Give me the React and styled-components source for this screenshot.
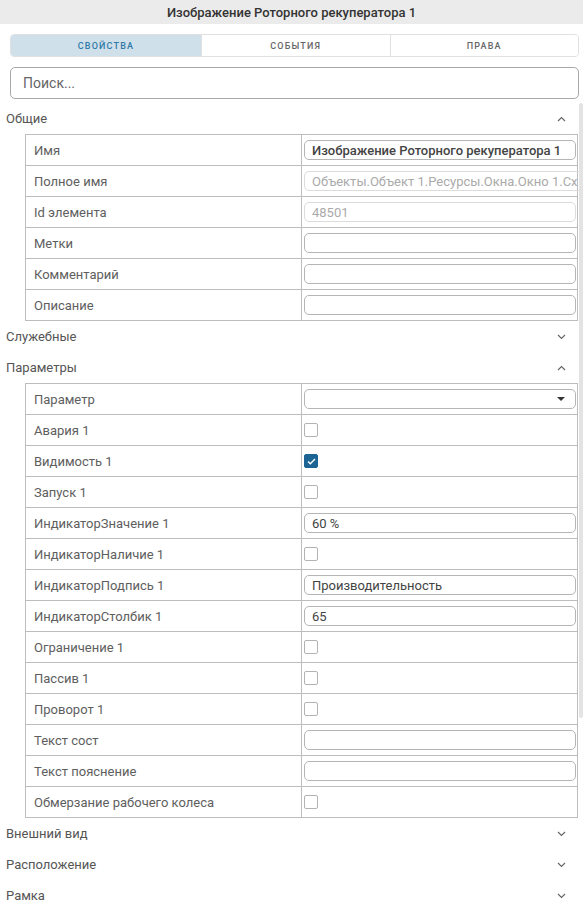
import styled, { createGlobalStyle } from 'styled-components';

const GlobalStyle = createGlobalStyle`
  html, body {
    margin: 0;
    padding: 0;
    background: #fff;
    font-family: Roboto, "Liberation Sans", Arial, sans-serif;
    overflow: hidden;
  }
  * { box-sizing: border-box; }
`;

const general = [
    { label: 'Имя', kind: 'text', value: 'Изображение Роторного рекуператора 1', strong: true },
    { label: 'Полное имя', kind: 'text', value: 'Объекты.Объект 1.Ресурсы.Окна.Окно 1.Сх', disabled: true },
    { label: 'Id элемента', kind: 'text', value: '48501', disabled: true },
    { label: 'Метки', kind: 'text', value: '' },
    { label: 'Комментарий', kind: 'text', value: '' },
    { label: 'Описание', kind: 'text', value: '' },
];

const params = [
    { label: 'Параметр', kind: 'select' },
    { label: 'Авария 1', kind: 'check' },
    { label: 'Видимость 1', kind: 'check', checked: true },
    { label: 'Запуск 1', kind: 'check' },
    { label: 'ИндикаторЗначение 1', kind: 'text', value: '60 %' },
    { label: 'ИндикаторНаличие 1', kind: 'check' },
    { label: 'ИндикаторПодпись 1', kind: 'text', value: 'Производительность' },
    { label: 'ИндикаторСтолбик 1', kind: 'text', value: '65' },
    { label: 'Ограничение 1', kind: 'check' },
    { label: 'Пассив 1', kind: 'check' },
    { label: 'Проворот 1', kind: 'check' },
    { label: 'Текст сост', kind: 'text', value: '' },
    { label: 'Текст пояснение', kind: 'text', value: '' },
    { label: 'Обмерзание рабочего колеса', kind: 'check' },
];

const Page = styled.div`
  width: 583px;
  height: 100vh;
  display: flex;
  flex-direction: column;
`;

const Title = styled.div`
  height: 24px;
  background: #ebebeb;
  color: #333;
  font-size: 13px;
  font-weight: 500;
  display: flex;
  align-items: center;
  justify-content: center;
`;

const Tabs = styled.div`
  margin: 10px 4px 0 10px;
  height: 23px;
  border: 1px solid #e0e0e0;
  border-radius: 4px;
  display: grid;
  grid-template-columns: 190px 1fr 1fr;
  overflow: hidden;
`;

const Tab = styled.div`
  display: flex;
  align-items: center;
  justify-content: center;
  font-size: 9px;
  font-weight: 500;
  letter-spacing: 1.2px;
  background: ${p => (p.$active ? '#cfe0ea' : '#fff')};
  color: ${p => (p.$active ? '#2f7aa8' : '#666')};
  & + & { border-left: 1px solid #e0e0e0; }
`;

const Search = styled.input`
  margin: 10px 4px 0 10px;
  height: 32px;
  border: 1px solid #a8a8a8;
  border-radius: 5px;
  padding: 0 12px;
  font-family: inherit;
  font-size: 14px;
  color: #333;
  outline: none;
  &::placeholder { color: #666; }
`;

const Body = styled.div`
  margin-top: 4px;
  flex: 1;
  min-height: 0;
  display: grid;
  grid-template-columns: 1fr 4px;
  overflow: hidden;
`;

const Content = styled.div`
  min-width: 0;
`;

const Rail = styled.div`
  display: flex;
  flex-direction: column;
`;

const Thumb = styled.div`
  height: 615px;
  background: #e3e3e3;
  border-radius: 2px;
`;

const SectionHead = styled.div`
  height: 31px;
  display: flex;
  align-items: center;
  justify-content: space-between;
  padding: 0 13px 0 6px;
  font-size: 13px;
  color: #555;
`;

const Table = styled.div`
  margin: 0 1px 0 25px;
  border: 1px solid #bdbdbd;
  border-bottom: none;
`;

const Row = styled.div`
  display: grid;
  grid-template-columns: 276px 1fr;
  height: 31px;
  border-bottom: 1px solid #bdbdbd;
`;

const Label = styled.div`
  display: flex;
  align-items: center;
  padding-left: 8px;
  font-size: 13px;
  color: #5e5e5e;
  border-right: 1px solid #bdbdbd;
`;

const Cell = styled.div`
  display: flex;
  align-items: center;
  padding: 0 1px 0 2px;
`;

const Field = styled.div`
  flex: 1;
  height: 20px;
  border: 1px solid ${p => (p.$disabled ? '#dcdcdc' : '#b5b5b5')};
  border-radius: 5px;
  padding: 0 7px;
  display: flex;
  align-items: center;
  justify-content: space-between;
  font-size: 13px;
  white-space: nowrap;
  overflow: hidden;
  color: ${p => (p.$disabled ? '#aaa' : '#444')};
  font-weight: ${p => (p.$strong ? 500 : 400)};
`;

const Box = styled.div`
  width: 14px;
  height: 14px;
  border-radius: 2px;
  border: 1.5px solid ${p => (p.$checked ? '#1b6494' : '#b3b3b3')};
  background: ${p => (p.$checked ? '#1b6494' : '#fff')};
  display: flex;
  align-items: center;
  justify-content: center;
`;

const Caret = styled.span`
  width: 0;
  height: 0;
  border-left: 4px solid transparent;
  border-right: 4px solid transparent;
  border-top: 4px solid #333;
  margin-right: 3px;
`;

const Chevron = ({ open }) => (
    <svg width="9" height="6" viewBox="0 0 9 6" fill="none" stroke="#666" strokeWidth="1.2">
        {open ? <path d="M1 5L4.5 1.5L8 5" /> : <path d="M1 1L4.5 4.5L8 1" />}
    </svg>
);

const Value = ({ item }) => {
    if (item.kind === 'check') {
        return (
            <Box $checked={item.checked}>
                {item.checked && (
                    <svg width="9" height="7" viewBox="0 0 9 7" fill="none" stroke="#fff" strokeWidth="1.4">
                        <path d="M1 3.6L3.3 5.8L8 1" />
                    </svg>
                )}
            </Box>
        );
    }
    if (item.kind === 'select') {
        return (
            <Field>
                <span />
                <Caret />
            </Field>
        );
    }
    return (
        <Field $disabled={item.disabled} $strong={item.strong}>
            {item.value}
        </Field>
    );
};

const PropTable = ({ rows }) => (
    <Table>
        {rows.map(item => (
            <Row key={item.label}>
                <Label>{item.label}</Label>
                <Cell>
                    <Value item={item} />
                </Cell>
            </Row>
        ))}
    </Table>
);

const Section = ({ title, open, rows }) => (
    <>
        <SectionHead>
            {title}
            <Chevron open={open} />
        </SectionHead>
        {open && rows && <PropTable rows={rows} />}
    </>
);

export default function App() {
    return (
        <Page>
            <GlobalStyle />
            <Title>Изображение Роторного рекуператора 1</Title>
            <Tabs>
                <Tab $active>СВОЙСТВА</Tab>
                <Tab>СОБЫТИЯ</Tab>
                <Tab>ПРАВА</Tab>
            </Tabs>
            <Search placeholder="Поиск..." />
            <Body>
                <Content>
                    <Section title="Общие" open rows={general} />
                    <Section title="Служебные" />
                    <Section title="Параметры" open rows={params} />
                    <Section title="Внешний вид" />
                    <Section title="Расположение" />
                    <Section title="Рамка" />
                </Content>
                <Rail>
                    <Thumb />
                </Rail>
            </Body>
        </Page>
    );
}
